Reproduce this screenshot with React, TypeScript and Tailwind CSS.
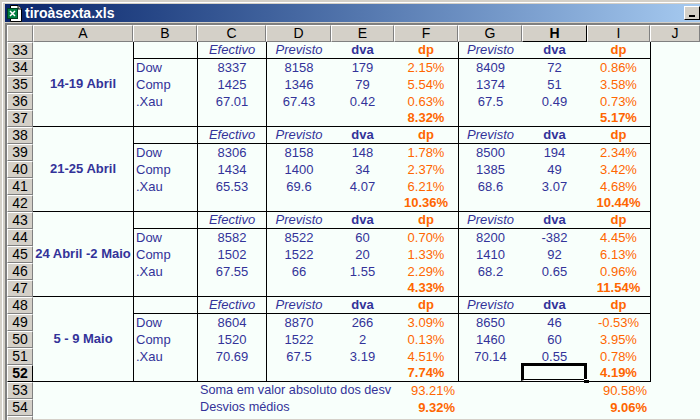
import React from 'react';

const colHeads = ['A', 'B', 'C', 'D', 'E', 'F', 'G', 'H', 'I', 'J'];

const blocks = [
  {
    start: 33,
    label: '14-19 Abril',
    rows: [
      ['Dow', '8337', '8158', '179', '2.15%', '8409', '72', '0.86%'],
      ['Comp', '1425', '1346', '79', '5.54%', '1374', '51', '3.58%'],
      ['.Xau', '67.01', '67.43', '0.42', '0.63%', '67.5', '0.49', '0.73%'],
    ],
    totals: ['8.32%', '5.17%'],
  },
  {
    start: 38,
    label: '21-25 Abril',
    rows: [
      ['Dow', '8306', '8158', '148', '1.78%', '8500', '194', '2.34%'],
      ['Comp', '1434', '1400', '34', '2.37%', '1385', '49', '3.42%'],
      ['.Xau', '65.53', '69.6', '4.07', '6.21%', '68.6', '3.07', '4.68%'],
    ],
    totals: ['10.36%', '10.44%'],
  },
  {
    start: 43,
    label: '24 Abril -2 Maio',
    rows: [
      ['Dow', '8582', '8522', '60', '0.70%', '8200', '-382', '4.45%'],
      ['Comp', '1502', '1522', '20', '1.33%', '1410', '92', '6.13%'],
      ['.Xau', '67.55', '66', '1.55', '2.29%', '68.2', '0.65', '0.96%'],
    ],
    totals: ['4.33%', '11.54%'],
  },
  {
    start: 48,
    label: '5 - 9 Maio',
    rows: [
      ['Dow', '8604', '8870', '266', '3.09%', '8650', '46', '-0.53%'],
      ['Comp', '1520', '1522', '2', '0.13%', '1460', '60', '3.95%'],
      ['.Xau', '70.69', '67.5', '3.19', '4.51%', '70.14', '0.55', '0.78%'],
    ],
    totals: ['7.74%', '4.19%'],
  },
];

const raised = 'border border-t-white border-l-white border-r-[#808080] border-b-[#808080]';

function RowHead({ n, active }: { n?: number; active?: boolean }) {
  return (
    <div
      className={`flex items-center justify-center bg-[#d4d0c8] text-[14px] text-black ${raised} ${
        active ? 'font-bold border-r-black border-b-black' : ''
      }`}
    >
      {n}
    </div>
  );
}

function ExcelIcon() {
  return (
    <svg width="15" height="17" viewBox="0 0 15 17">
      <path d="M3.5 0.5H11L14.5 4V16.5H3.5Z" fill="#fff" stroke="#000" />
      <path d="M11 0.5V4H14.5" fill="#d4d0c8" stroke="#000" />
      <rect x="0.5" y="3.5" width="10" height="10" fill="#008040" stroke="#004020" />
      <path d="M3 6L8 11M8 6L3 11" stroke="#fff" strokeWidth="1.5" />
    </svg>
  );
}

// one row of the sheet, columns B to J (A is a spanned cell)
function Cell({ className = '', children }: { className?: string; children?: React.ReactNode }) {
  return <div className={`flex items-center justify-center whitespace-nowrap ${className}`}>{children}</div>;
}

function Block({ block, last }: { block: (typeof blocks)[number]; last: boolean }) {
  const s = block.start;
  const line = 'border-b border-b-black';
  return (
    <>
      {/* header row */}
      <RowHead n={s} />
      <div className="row-span-5 flex items-center justify-center border-b border-b-black text-[13px] font-bold text-[#333399] whitespace-nowrap">
        {block.label}
      </div>
      <Cell className={`border-l border-l-black ${line}`} />
      <Cell className={`border-l border-l-black italic ${line}`}>Efectivo</Cell>
      <Cell className={`border-l border-l-black italic ${line}`}>Previsto</Cell>
      <Cell className={`font-bold ${line}`}>dva</Cell>
      <Cell className={`font-bold text-[#ff6600] ${line}`}>dp</Cell>
      <Cell className={`border-l border-l-black italic ${line}`}>Previsto</Cell>
      <Cell className={`font-bold ${line}`}>dva</Cell>
      <Cell className={`font-bold text-[#ff6600] ${line}`}>dp</Cell>
      <Cell className="border-l border-l-black" />

      {/* data rows */}
      {block.rows.map((r, i) => (
        <React.Fragment key={r[0]}>
          <RowHead n={s + 1 + i} />
          <Cell className="justify-start border-l border-l-black pl-[2px]">{r[0]}</Cell>
          <Cell className="border-l border-l-black">{r[1]}</Cell>
          <Cell className="border-l border-l-black">{r[2]}</Cell>
          <Cell>{r[3]}</Cell>
          <Cell className="text-[#ff6600]">{r[4]}</Cell>
          <Cell className="border-l border-l-black">{r[5]}</Cell>
          <Cell>{r[6]}</Cell>
          <Cell className="text-[#ff6600]">{r[7]}</Cell>
          <Cell className="border-l border-l-black" />
        </React.Fragment>
      ))}

      {/* totals row */}
      <RowHead n={s + 4} active={last} />
      <Cell className={`border-l border-l-black ${line}`} />
      <Cell className={`border-l border-l-black ${line}`} />
      <Cell className={`border-l border-l-black ${line}`} />
      <Cell className={line} />
      <Cell className={`font-bold text-[#ff6600] ${line}`}>{block.totals[0]}</Cell>
      <Cell className={`border-l border-l-black ${line}`} />
      <Cell className={`relative ${line}`}>
        {last && (
          <div className="absolute left-[-1px] right-0 top-[-2px] bottom-0 z-10 border-x-[3px] border-t-[3px] border-b border-x-black border-t-black border-b-white">
            <div className="absolute bottom-0 left-0 right-0 h-px bg-black" />
            <div className="absolute bottom-[-4px] right-[-5px] h-[5px] w-[5px] border-y border-white bg-black" />
          </div>
        )}
      </Cell>
      <Cell className={`font-bold text-[#ff6600] ${line}`}>{block.totals[1]}</Cell>
      <Cell className="border-l border-l-black" />
    </>
  );
}

export default function App() {
  return (
    <div className="h-[420px] w-[700px] overflow-hidden bg-[#d4d0c8] pl-[2px] pt-[2px] font-['Liberation_Sans',Arial,sans-serif]">
      <div className="flex h-full flex-col border-l border-t border-white pl-[2px]">
        {/* title bar */}
        <div className="mt-[1px] flex h-[18px] items-center bg-gradient-to-r from-[#0a246a] to-[#a6caf0] pl-[2px]">
          <ExcelIcon />
          <span className="ml-[3px] text-[14px] font-bold text-white">tiroàsexta.xls</span>
          <button
            className={`ml-auto flex h-[14px] w-[16px] items-end justify-center bg-[#d4d0c8] pb-[2px] ${raised} border-r-black border-b-black`}
          >
            <span className="h-[2px] w-[6px] bg-black" />
          </button>
        </div>

        {/* sheet */}
        <div className="mt-[1px] border-l-2 border-t-2 border-[#808080]">
          <div className="grid grid-cols-[26px_100px_64px_69px_65px_63px_64px_64px_65px_63px_1fr] grid-rows-[17px] auto-rows-[17px] bg-[#f8fffb] text-[13px] text-[#333399]">
            <div className={`bg-[#d4d0c8] ${raised}`} />
            {colHeads.map((c) => (
              <div
                key={c}
                className={`flex items-center justify-center bg-[#d4d0c8] text-[14px] text-black ${raised} ${
                  c === 'H' ? 'border-r-black border-b-black font-bold' : ''
                }`}
              >
                {c}
              </div>
            ))}

            {blocks.map((b, i) => (
              <Block key={b.start} block={b} last={i === blocks.length - 1} />
            ))}

            {/* summary rows */}
            <RowHead n={53} />
            <div className="col-span-2" />
            <div className="col-span-3 flex items-center whitespace-nowrap pl-[3px] text-[12.7px]">
              Soma em valor absoluto dos desv
            </div>
            <div className="flex items-center justify-end pr-[3px] text-[#ff6600]">93.21%</div>
            <div className="col-span-2" />
            <div className="flex items-center justify-end pr-[3px] text-[#ff6600]">90.58%</div>
            <div />

            <RowHead n={54} />
            <div className="col-span-2" />
            <div className="col-span-3 flex items-center whitespace-nowrap pl-[3px] text-[12.7px]">Desvios médios</div>
            <div className="flex items-center justify-end pr-[3px] font-bold text-[#ff6600]">9.32%</div>
            <div className="col-span-2" />
            <div className="flex items-center justify-end pr-[3px] font-bold text-[#ff6600]">9.06%</div>
            <div />

            <RowHead />
            <div className="col-span-10 border-t-[3px] border-t-[#f8fffb] bg-[#d4d0c8]" />
          </div>
        </div>
      </div>
    </div>
  );
}
